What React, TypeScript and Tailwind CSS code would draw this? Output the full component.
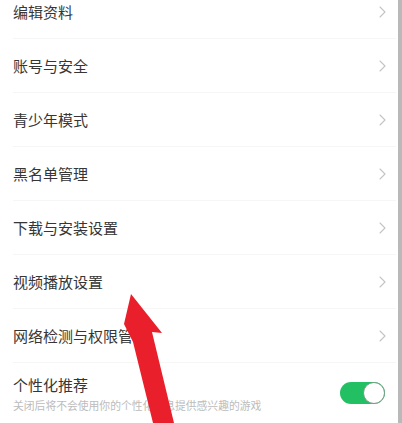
import React from 'react';

const rows = ['编辑资料', '账号与安全', '青少年模式', '黑名单管理', '下载与安装设置', '视频播放设置', '网络检测与权限管理'];

const Chevron = () => (
  <svg width="7" height="12" viewBox="0 0 7 12" fill="none" className="shrink-0">
    <path d="M1 1l5 5-5 5" stroke="#c4c4c4" strokeWidth="1.1" strokeLinecap="round" strokeLinejoin="round" />
  </svg>
);

export default function App() {
  return (
    <div
      className="relative h-[423px] w-[402px] overflow-hidden bg-white"
      style={{ fontFamily: '"Noto Sans CJK SC", "Noto Sans", sans-serif' }}
    >
      <div className="flex h-full">
        {/* list */}
        <div className="flex flex-1 flex-col -mt-[15px]">
          {rows.map((label) => (
            <div key={label} className="ml-[13px] mr-[2px] flex h-[54px] items-center justify-between border-b border-[#f6f6f6] pr-[10px]">
              <span className="text-[15px] leading-none text-[#363636]">{label}</span>
              <Chevron />
            </div>
          ))}
          <div className="ml-[13px] mr-[2px] flex h-[60px] items-center justify-between pr-[11px]">
            <div className="flex flex-col gap-[8px] pt-[2px]">
              <span className="text-[15px] leading-none text-[#363636]">个性化推荐</span>
              <span className="text-[10.8px] leading-none text-[#bcbcbc]">关闭后将不会使用你的个性化信息提供感兴趣的游戏</span>
            </div>
            <div className="relative h-[22px] w-[45px] rounded-full bg-[#22c063]">
              <div className="absolute right-0 top-0 h-[22px] w-[22px] rounded-full border border-[#7a9a86] bg-white" />
            </div>
          </div>
        </div>
        {/* scroll edge */}
        <div className="w-[4px] bg-[#b9b9b9]" />
      </div>

      {/* red annotation arrow */}
      <svg className="pointer-events-none absolute left-0 top-0" width="402" height="423" viewBox="0 0 402 423">
        <polygon
          points="131,294 162,333 152,332 174,423 153,423 133,342 124,324"
          fill="#e9202b"
        />
      </svg>
    </div>
  );
}
